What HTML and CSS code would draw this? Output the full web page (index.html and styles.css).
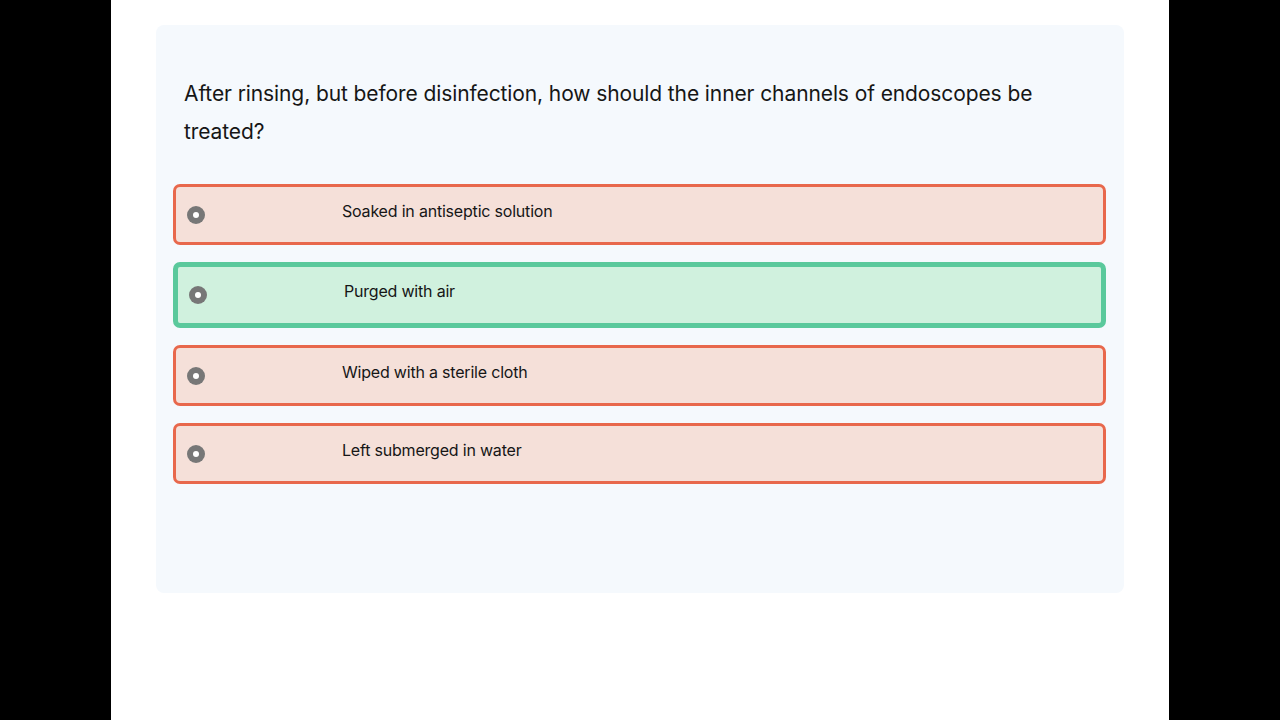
FILE: index.html
```html
<!DOCTYPE html>
<html lang="en">
<head>
  <meta charset="UTF-8">
  <meta name="viewport" content="width=device-width, initial-scale=1.0">
  <title>Quiz</title>
  <link rel="stylesheet" href="styles.css">
</head>
<body>
  <div class="page">
    <div class="card">
      <h2 class="question">After rinsing, but before disinfection, how should the inner channels of endoscopes be treated?</h2>

      <!-- Answer options -->
      <div class="options">
        <label class="option wrong">
          <span class="radio"></span>
          <span class="option-text">Soaked in antiseptic solution</span>
        </label>
        <label class="option right">
          <span class="radio"></span>
          <span class="option-text">Purged with air</span>
        </label>
        <label class="option wrong">
          <span class="radio"></span>
          <span class="option-text">Wiped with a sterile cloth</span>
        </label>
        <label class="option wrong">
          <span class="radio"></span>
          <span class="option-text">Left submerged in water</span>
        </label>
      </div>
    </div>
  </div>
</body>
</html>
```

FILE: styles.css
```css
body {
  margin: 0;
  background: #000;
  font-family: Inter, "Noto Sans", sans-serif;
  color: #161616;
}
.page {
  width: 1058px;
  height: 720px;
  margin-left: 111px;
  background: #fff;
  padding: 25px 45px 0 45px;
  box-sizing: border-box;
}
.card {
  width: 968px;
  height: 568px;
  box-sizing: border-box;
  background: #f5f9fd;
  border-radius: 8px;
  padding: 50px 18px 0 17px;
}
.question {
  margin: 0 0 33px 11px;
  font-size: 21px;
  font-weight: 400;
  letter-spacing: -0.1px;
  line-height: 38px;
}
.options {
  display: flex;
  flex-direction: column;
  gap: 17px;
}
.option {
  display: flex;
  align-items: center;
  height: 61px;
  box-sizing: border-box;
  border-radius: 7px;
  padding-left: 11px;
}
.option.wrong {
  border: 3px solid #e8684c;
  background: #f5e0d9;
}
.option.right {
  height: 66px;
  border: 5px solid #5ac99c;
  background: #d0f1de;
  padding-left: 11px;
}
.radio {
  width: 18px;
  height: 18px;
  border-radius: 50%;
  background: #777;
  display: flex;
  align-items: center;
  justify-content: center;
  flex-shrink: 0;
}
.radio::after {
  content: "";
  width: 6px;
  height: 6px;
  border-radius: 50%;
  background: #fff;
}
.option-text {
  margin-left: 137px;
  padding-bottom: 8px;
  font-size: 16px;
  letter-spacing: -0.2px;
}
```
